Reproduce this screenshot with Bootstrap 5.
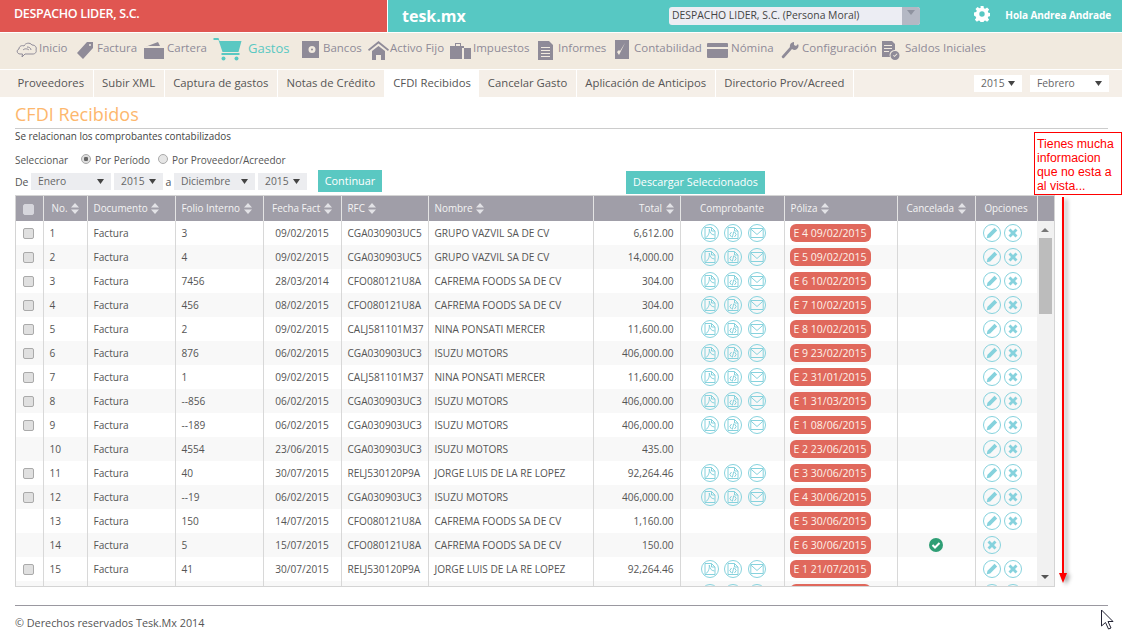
<!DOCTYPE html>
<html lang="es"><head><meta charset="utf-8"><title>CFDI Recibidos</title>
<link rel="stylesheet" href="https://cdn.jsdelivr.net/npm/bootstrap@5.3.0/dist/css/bootstrap.min.css">
<style>
html,body{height:634px;overflow:hidden}
body{font-family:"Open Sans","Liberation Sans",sans-serif;font-size:10.5px;color:#555;background:#fff;position:relative}
.top-bar{height:32px;color:#fff}
.brand-red{width:388px;background:#e05651;padding:0 0 4px 14px;font-weight:600;font-size:12.5px;letter-spacing:-.35px;border-right:1px solid #fff}
.brand-teal{background:#57c8c3;flex:1}
.tesk{font-weight:700;font-size:16px;margin-left:14px;width:267px}
.company-select{width:251px;height:18px;background:#ecedf3;border-radius:3px;overflow:hidden;color:#444;font-size:10.4px}
.company-select span{flex:1;padding-left:3px}
.company-select i{width:18px;height:18px;background:#b4b8c4;display:block;position:relative}
.company-select i::after{content:"";position:absolute;left:5px;top:3px;border:4px solid transparent;border-top:5px solid #8f93a0}
.hello{font-weight:700;font-size:10.05px;margin-left:15px;letter-spacing:-.1px;margin-right:11px;margin-top:-1px}
.gear{margin-top:-4px}
.main-menu{height:36px;margin-top:1px;background:#f1eadf;padding-left:15px;font-size:11.5px;color:#8f8b98}
.main-menu>span{display:flex;align-items:center;position:absolute;top:33px;height:34px}
.main-menu>span em{font-style:normal;margin-bottom:4px}
.main-menu svg{display:block;fill:#8f8b98}
.main-menu>span.cart-item{top:32px}
.main-menu>span.cart-item em{margin-left:5px;margin-bottom:0;font-size:13px;color:#5ac8c2}
.sub-menu{height:27px;margin-top:1px;background:#f5efe8;padding-left:9px;font-size:11.3px;color:#555}
.sub-menu .tabi{height:27px;padding:0 8.5px;border-right:1px solid #fff;display:flex;align-items:center}
.sub-menu .tabi.on{background:#fff;border-right:0}
.plain-sel{appearance:none;border:0;border-radius:0;height:17px;padding:0 0 0 7px;font-family:inherit;font-size:10.3px;color:#666;background-color:#fff;background-repeat:no-repeat;background-position:right 7px center;background-size:7px 5px;background-image:url("data:image/svg+xml,%3Csvg xmlns='http://www.w3.org/2000/svg' viewBox='0 0 7 5'%3E%3Cpath d='M0 0h7L3.500 5z' fill='%23444'/%3E%3C/svg%3E")}
.w48{width:48px}.w79{width:79px;margin-left:8px;margin-right:13px}
.page-head{padding:7px 14px 0 15px}
.page-title{font-size:18px;line-height:20px;color:#fdb76d;font-weight:400;margin:0;border-bottom:1px solid #ccc;height:25px}
.page-sub{font-size:9.9px;line-height:14px;color:#444}
.pick-row{margin:11px 15px 0;height:13px;line-height:13px;font-size:10px}
.pick-row .form-check-input{width:10px;height:10px;margin:-3px 0 0;background-color:#e6e6e6;border:1px solid #aaa;flex:none}
.pick-row .form-check-input:checked{background-color:#ddd;border-color:#aaa;background-image:radial-gradient(circle,#666 0 2px,transparent 2.4px)}
.range-row{margin:4px 15px 0;height:23px;position:relative}
.range-row .plain-sel{background-color:#ecedf0;height:17px}
.teal-btn{background:#5ac8c2;color:#fff;border:0;border-radius:0;font-size:10.9px;padding:0;line-height:1}
.teal-btn:hover{background:#5ac8c2;color:#fff}
.btn-go{width:64px;height:22px;margin:-1px 0 0 11px}
.btn-dl{width:139px;height:23px;margin-left:244px;font-size:10.8px}
.grid-box{width:1040px;height:392px;margin:1px 0 0 15px;border:1px solid #d4d4d4;overflow:hidden}
.grid{table-layout:fixed;margin:0;border-collapse:collapse;font-size:10.1px;color:#555}
.grid td,.grid th{padding:0 6px;border:0;border-right:1px solid #d8d8d8;white-space:nowrap;vertical-align:middle;overflow:hidden;background:transparent;color:inherit;box-shadow:none}
.grid-head{width:1038px}
.grid-head th{height:25px;background:#a09ea8;color:#f4f4f4;font-weight:500;font-size:9.9px;border-right:1px solid #e4e4e4}
.grid-head th:last-child{border-right:0}
.grid-body{width:1021px}
.grid-body tr{height:24px}
.grid-body td{padding-top:2px}
.grid-body tr:nth-child(even) td{background:#f8f8f8}
.grid-pane{height:365px;width:1021px;overflow:hidden}
.sort{width:8px;height:11px;fill:#e2e2e6;vertical-align:-2px;margin-left:1px}
.box-check{width:11px;height:11px;display:block;background:#e0e0e0;border:1px solid #aaa;border-radius:2px;margin:-1px 0 0 1px}
.box-check.hd{background:#d6d6dc;border-color:#d6d6dc;margin-top:1px}
.ico{width:18px;height:18px;fill:none;stroke:#86d2dd;stroke-width:1;display:block}
.f{fill:#86d2dd;stroke:none}
.ico-set{display:flex;justify-content:center;gap:5.500px;padding-left:2px;margin-top:-2px}
.opt-set{display:flex;gap:3px;padding-left:1px;margin-top:-2px}
.poliza{display:block;width:81px;height:18px;line-height:18px;background:#e0685c;color:#fdf3ea;font-size:10.5px;border-radius:6px;text-align:center;font-weight:400;margin:-2px 0 0 1px}
.ok-mark{width:14px;height:14px;display:block;margin:-2px auto 0}
.fake-scroll{width:17px;height:365px;background:#f1f1f1;position:relative}
.fake-scroll b{position:absolute;left:2px;width:13px;height:76px;top:17px;background:#bcbcbc}
.fake-scroll i{position:absolute;left:4px;border:4px solid transparent}
.fake-scroll .up{top:3px;border-bottom:4px solid #777}
.fake-scroll .dn{bottom:3px;border-top:4px solid #555}
.foot{margin:18px 14px 0 15px;border-top:1px solid #9a98a0;padding-top:9px;font-size:10.8px;line-height:15px;color:#555}
.note{position:absolute;left:1034px;top:132px;width:88px;height:63px;border:1px solid #f00;color:#f00;background:#fff;font:12.3px/14px "Liberation Sans",sans-serif;padding:4px 0 0 2px}
.arrow{position:absolute;left:1058px;top:197px;width:14px;height:392px;overflow:visible;filter:drop-shadow(3px 2px 2px rgba(0,0,0,.4))}
.cursor{position:absolute;left:1100px;top:609px;width:15px;height:22px}
</style></head><body>
<svg width="0" height="0" class="position-absolute"><defs>
<symbol id="s" viewBox="0 0 8 11"><path d="M4 0l4 4.500H0zM4 11L0 6.500h8z"/></symbol>
<symbol id="p" viewBox="0 0 18 18"><circle cx="9" cy="9" r="8.500"/><path d="M4 3.500h6.500L14 7v7.500H4zM10.500 3.500V7H14M4.500 14C8 11.500 8.500 8 8.300 5c.5 3.500 1.500 5.500 5.200 6"/></symbol>
<symbol id="x" viewBox="0 0 18 18"><circle cx="9" cy="9" r="8.500"/><path d="M4 3.500h6.500L14 7v7.500H4zM10.500 3.500V7H14M7.500 8L5.800 10.500l1.700 2.500M10.500 8l1.700 2.500-1.700 2.500M9.800 7.500l-1.500 6"/></symbol>
<symbol id="m" viewBox="0 0 18 18"><circle cx="9" cy="9" r="8.500"/><path d="M2.800 4.500h12.400v9H2.800zM2.800 5L9 10.500 15.200 5"/></symbol>
<symbol id="e" viewBox="0 0 18 18"><circle cx="9" cy="9" r="8.500"/><path class="f" d="M11.500 3.800l2.700 2.700-7 7-3.500.8.800-3.500z"/></symbol>
<symbol id="d" viewBox="0 0 18 18"><circle cx="9" cy="9" r="8.500"/><path class="f" d="M6.500 4.500L9 7l2.500-2.500 2 2L11 9l2.500 2.500-2 2L9 11l-2.500 2.500-2-2L7 9 4.500 6.500z"/></symbol>
</defs></svg>

<div class="top-bar d-flex">
  <div class="brand-red d-flex align-items-center">DESPACHO LIDER, S.C.</div>
  <div class="brand-teal d-flex align-items-center">
    <div class="tesk">tesk.mx</div>
    <div class="company-select d-flex align-items-center"><span>DESPACHO LIDER, S.C. (Persona Moral)</span><i></i></div>
    <svg width="16" height="16" viewBox="0 0 16 16" fill="#fff" class="ms-auto gear"><path fill-rule="evenodd" d="M6.500 0h3l.4 2.200 1.300.6L13.100 1.500l2 2-1.300 1.900.6 1.300 2.200.4v3l-2.200.4-.6 1.300 1.300 1.900-2 2-1.900-1.300-1.300.6-.4 2.200h-3l-.4-2.200-1.300-.6-1.900 1.300-2-2 1.300-1.900-.6-1.300L0 9.500v-3l2.200-.4.6-1.300L1.500 3l2-2 1.900 1.300 1.300-.6zM8 5.300a2.700 2.700 0 100 5.400 2.700 2.700 0 000-5.400z"/></svg>
    <div class="hello">Hola Andrea Andrade</div>
  </div>
</div>

<div class="main-menu">
  <span style="left:16px"><svg width="22" height="18" viewBox="0 0 22 18" style="fill:none;stroke:#8f8b98"><path d="M4 13c-3 0-4-4-1-5 0-3 3-4 5-3 1-3 6-4 8-1 3 0 5 2 4 5 1 2-1 4-3 4H9l-3 3 .500-3z"/><path d="M7 9c2-2 5-1 6 0M11 6c2 0 4 1 4 3"/></svg><em style="margin-left:1px">Inicio</em></span>
  <span style="left:76px"><svg width="18" height="19" viewBox="0 0 18 19"><path d="M11 1h6v6L7 18l-6-6zM14 3a1 1 0 100 2 1 1 0 000-2z" fill-rule="evenodd"/></svg><em style="margin-left:3px">Factura</em></span>
  <span style="left:144px"><svg width="20" height="20" viewBox="0 0 20 20"><path d="M1 7l13-5 2 4H4zM0 8h20v11H1a1 1 0 01-1-1z"/></svg><em style="margin-left:3px">Cartera</em></span>
  <span class="cart-item" style="left:213px"><svg width="30" height="24" viewBox="0 0 29 24" style="fill:#5ac8c2"><path d="M0 1h5l1 3h22l-3 11H9L5 3H0zM8 16h18v2H8z"/><circle cx="10" cy="21.500" r="2"/><circle cx="23" cy="21.500" r="2"/></svg><em>Gastos</em></span>
  <span style="left:301px"><svg width="18" height="20" viewBox="0 0 18 20"><path fill-rule="evenodd" d="M1 1h17v17H1zM11 6a3.500 3.500 0 100 7 3.500 3.500 0 000-7zM11 8.500a1 1 0 110 2 1 1 0 010-2z"/></svg><em style="margin-left:4px">Bancos</em></span>
  <span style="left:368px"><svg width="21" height="20" viewBox="0 0 21 20"><path d="M10.500 1L21 9.500l-1 1.500-9.500-7.500L1 11 0 9.500zM4 11l6.500-5 6.500 5v9h-4v-5H8v5H4z"/></svg><em style="margin-left:1px">Activo Fijo</em></span>
  <span style="left:450px"><svg width="21" height="19" viewBox="0 0 21 19"><path d="M0 5h5V2h6v3h3v13H0zM6 3v2h4V3zM12 7h9v11h-9z" fill-rule="evenodd"/></svg><em style="margin-left:2px">Impuestos</em></span>
  <span style="left:538px"><svg width="15" height="20" viewBox="0 0 15 20"><path fill-rule="evenodd" d="M0 1h11l4 4v15H0zM3 7v1h9V7zM3 10v1h9v-1zM3 13v1h9v-1zM3 16v1h9v-1z"/></svg><em style="margin-left:5px">Informes</em></span>
  <span style="left:615px"><svg width="14" height="20" viewBox="0 0 14 20"><path fill-rule="evenodd" d="M0 0h14v19H0zM2 12l2 3 6-12-5 8-1-1z"/></svg><em style="margin-left:5px">Contabilidad</em></span>
  <span style="left:707px"><svg width="21" height="15" viewBox="0 0 21 15"><path fill-rule="evenodd" d="M1 0h19a1 1 0 011 1v13a1 1 0 01-1 1H1a1 1 0 01-1-1V1a1 1 0 011-1zM0 4v2h21V4z"/></svg><em style="margin-left:3px">Nómina</em></span>
  <span style="left:781px"><svg width="18" height="19" viewBox="0 0 18 19"><path d="M13 1a4 4 0 00-4 5L1 15c-1 1 1 3 2 2l8-9a4 4 0 006-5l-2 2-2-1V2z"/></svg><em style="margin-left:3px">Configuración</em></span>
  <span style="left:882px"><svg width="18" height="20" viewBox="0 0 18 20"><path fill-rule="evenodd" d="M0 1h10l3 3v6a5 5 0 00-5 7H0zM2 5v1h8V5zM2 8v1h8V8zM2 11v1h5v-1z"/><path fill-rule="evenodd" d="M13 11a4.500 4.500 0 110 9 4.500 4.500 0 010-9zM11 15.500l1.500 1.500 3-3-.7-.6-2.300 2.300-.8-.8z"/></svg><em style="margin-left:5px">Saldos Iniciales</em></span>
</div>

<div class="sub-menu d-flex align-items-center">
  <span class="tabi">Proveedores</span><span class="tabi">Subir XML</span><span class="tabi">Captura de gastos</span><span class="tabi">Notas de Crédito</span><span class="tabi on">CFDI Recibidos</span><span class="tabi">Cancelar Gasto</span><span class="tabi">Aplicación de Anticipos</span><span class="tabi">Directorio Prov/Acreed</span>
  <select class="plain-sel w48 ms-auto" aria-label="Año"><option>2015</option></select>
  <select class="plain-sel w79" aria-label="Mes"><option>Febrero</option></select>
</div>

<div class="page-head">
  <h1 class="page-title">CFDI Recibidos</h1>
  <div class="page-sub">Se relacionan los comprobantes contabilizados</div>
</div>
<div class="pick-row d-flex align-items-center">
  <span style="width:66px">Seleccionar</span>
  <input class="form-check-input" type="radio" name="t" checked aria-label="Por Período"><span style="margin-left:4px;width:63px">Por Período</span>
  <input class="form-check-input" type="radio" name="t" aria-label="Por Proveedor"><span style="margin-left:4px">Por Proveedor/Acreedor</span>
</div>
<div class="range-row d-flex align-items-start">
  <span style="width:16px;line-height:22px">De</span>
  <select class="plain-sel" style="width:80px;margin-top:2px" aria-label="Mes inicial"><option>Enero</option></select>
  <select class="plain-sel" style="width:49px;margin:2px 0 0 3px" aria-label="Año inicial"><option>2015</option></select>
  <span style="width:11px;line-height:22px;text-align:center">a</span>
  <select class="plain-sel" style="width:81px;margin-top:2px" aria-label="Mes final"><option>Diciembre</option></select>
  <select class="plain-sel" style="width:49px;margin:2px 0 0 3px" aria-label="Año final"><option>2015</option></select>
  <button class="btn teal-btn btn-go" type="button">Continuar</button>
  <button class="btn teal-btn btn-dl" type="button">Descargar Seleccionados</button>
</div>

<div class="grid-box">
<table class="table grid grid-head"><colgroup><col style="width:27px"><col style="width:44px"><col style="width:88px"><col style="width:88px"><col style="width:78px"><col style="width:87px"><col style="width:165px"><col style="width:87px"><col style="width:104px"><col style="width:113px"><col style="width:78px"><col style="width:62px"><col></colgroup>
<thead><tr>
<th><span class="box-check hd"></span></th><th class="ps-2">No. <svg class="sort"><use href="#s"/></svg></th><th>Documento <svg class="sort"><use href="#s"/></svg></th><th>Folio Interno <svg class="sort"><use href="#s"/></svg></th><th class="text-center px-0">Fecha Fact <svg class="sort"><use href="#s"/></svg></th><th>RFC <svg class="sort"><use href="#s"/></svg></th><th>Nombre <svg class="sort"><use href="#s"/></svg></th><th class="text-end">Total <svg class="sort"><use href="#s"/></svg></th><th class="text-center">Comprobante</th><th>Póliza <svg class="sort"><use href="#s"/></svg></th><th class="text-center px-0">Cancelada <svg class="sort"><use href="#s"/></svg></th><th class="text-center px-0">Opciones</th><th></th>
</tr></thead></table>
<div class="d-flex">
<div class="grid-pane">
<table class="table grid grid-body"><colgroup><col style="width:27px"><col style="width:44px"><col style="width:88px"><col style="width:88px"><col style="width:78px"><col style="width:87px"><col style="width:165px"><col style="width:87px"><col style="width:104px"><col style="width:113px"><col style="width:78px"><col style="width:62px"></colgroup>
<tbody>
<tr><td><span class="box-check"></span></td><td>1</td><td>Factura</td><td>3</td><td class="text-center px-0">09/02/2015</td><td>CGA030903UC5</td><td>GRUPO VAZVIL SA DE CV</td><td class="text-end">6,612.00</td><td><div class="ico-set"><svg class="ico"><use href="#p"/></svg><svg class="ico"><use href="#x"/></svg><svg class="ico"><use href="#m"/></svg></div></td><td class="px-1"><span class="poliza">E 4 09/02/2015</span></td><td></td><td><div class="opt-set"><svg class="ico"><use href="#e"/></svg><svg class="ico"><use href="#d"/></svg></div></td></tr>
<tr><td><span class="box-check"></span></td><td>2</td><td>Factura</td><td>4</td><td class="text-center px-0">09/02/2015</td><td>CGA030903UC5</td><td>GRUPO VAZVIL SA DE CV</td><td class="text-end">14,000.00</td><td><div class="ico-set"><svg class="ico"><use href="#p"/></svg><svg class="ico"><use href="#x"/></svg><svg class="ico"><use href="#m"/></svg></div></td><td class="px-1"><span class="poliza">E 5 09/02/2015</span></td><td></td><td><div class="opt-set"><svg class="ico"><use href="#e"/></svg><svg class="ico"><use href="#d"/></svg></div></td></tr>
<tr><td><span class="box-check"></span></td><td>3</td><td>Factura</td><td>7456</td><td class="text-center px-0">28/03/2014</td><td>CFO080121U8A</td><td>CAFREMA FOODS SA DE CV</td><td class="text-end">304.00</td><td><div class="ico-set"><svg class="ico"><use href="#p"/></svg><svg class="ico"><use href="#x"/></svg><svg class="ico"><use href="#m"/></svg></div></td><td class="px-1"><span class="poliza">E 6 10/02/2015</span></td><td></td><td><div class="opt-set"><svg class="ico"><use href="#e"/></svg><svg class="ico"><use href="#d"/></svg></div></td></tr>
<tr><td><span class="box-check"></span></td><td>4</td><td>Factura</td><td>456</td><td class="text-center px-0">08/02/2015</td><td>CFO080121U8A</td><td>CAFREMA FOODS SA DE CV</td><td class="text-end">304.00</td><td><div class="ico-set"><svg class="ico"><use href="#p"/></svg><svg class="ico"><use href="#x"/></svg><svg class="ico"><use href="#m"/></svg></div></td><td class="px-1"><span class="poliza">E 7 10/02/2015</span></td><td></td><td><div class="opt-set"><svg class="ico"><use href="#e"/></svg><svg class="ico"><use href="#d"/></svg></div></td></tr>
<tr><td><span class="box-check"></span></td><td>5</td><td>Factura</td><td>2</td><td class="text-center px-0">09/02/2015</td><td>CALJ581101M37</td><td>NINA PONSATI MERCER</td><td class="text-end">11,600.00</td><td><div class="ico-set"><svg class="ico"><use href="#p"/></svg><svg class="ico"><use href="#x"/></svg><svg class="ico"><use href="#m"/></svg></div></td><td class="px-1"><span class="poliza">E 8 10/02/2015</span></td><td></td><td><div class="opt-set"><svg class="ico"><use href="#e"/></svg><svg class="ico"><use href="#d"/></svg></div></td></tr>
<tr><td><span class="box-check"></span></td><td>6</td><td>Factura</td><td>876</td><td class="text-center px-0">06/02/2015</td><td>CGA030903UC3</td><td>ISUZU MOTORS</td><td class="text-end">406,000.00</td><td><div class="ico-set"><svg class="ico"><use href="#p"/></svg><svg class="ico"><use href="#x"/></svg><svg class="ico"><use href="#m"/></svg></div></td><td class="px-1"><span class="poliza">E 9 23/02/2015</span></td><td></td><td><div class="opt-set"><svg class="ico"><use href="#e"/></svg><svg class="ico"><use href="#d"/></svg></div></td></tr>
<tr><td><span class="box-check"></span></td><td>7</td><td>Factura</td><td>1</td><td class="text-center px-0">09/02/2015</td><td>CALJ581101M37</td><td>NINA PONSATI MERCER</td><td class="text-end">11,600.00</td><td><div class="ico-set"><svg class="ico"><use href="#p"/></svg><svg class="ico"><use href="#x"/></svg><svg class="ico"><use href="#m"/></svg></div></td><td class="px-1"><span class="poliza">E 2 31/01/2015</span></td><td></td><td><div class="opt-set"><svg class="ico"><use href="#e"/></svg><svg class="ico"><use href="#d"/></svg></div></td></tr>
<tr><td><span class="box-check"></span></td><td>8</td><td>Factura</td><td>--856</td><td class="text-center px-0">06/02/2015</td><td>CGA030903UC3</td><td>ISUZU MOTORS</td><td class="text-end">406,000.00</td><td><div class="ico-set"><svg class="ico"><use href="#p"/></svg><svg class="ico"><use href="#x"/></svg><svg class="ico"><use href="#m"/></svg></div></td><td class="px-1"><span class="poliza">E 1 31/03/2015</span></td><td></td><td><div class="opt-set"><svg class="ico"><use href="#e"/></svg><svg class="ico"><use href="#d"/></svg></div></td></tr>
<tr><td><span class="box-check"></span></td><td>9</td><td>Factura</td><td>--189</td><td class="text-center px-0">06/02/2015</td><td>CGA030903UC3</td><td>ISUZU MOTORS</td><td class="text-end">406,000.00</td><td><div class="ico-set"><svg class="ico"><use href="#p"/></svg><svg class="ico"><use href="#x"/></svg><svg class="ico"><use href="#m"/></svg></div></td><td class="px-1"><span class="poliza">E 1 08/06/2015</span></td><td></td><td><div class="opt-set"><svg class="ico"><use href="#e"/></svg><svg class="ico"><use href="#d"/></svg></div></td></tr>
<tr><td></td><td>10</td><td>Factura</td><td>4554</td><td class="text-center px-0">23/06/2015</td><td>CGA030903UC3</td><td>ISUZU MOTORS</td><td class="text-end">435.00</td><td></td><td class="px-1"><span class="poliza">E 2 23/06/2015</span></td><td></td><td><div class="opt-set"><svg class="ico"><use href="#e"/></svg><svg class="ico"><use href="#d"/></svg></div></td></tr>
<tr><td><span class="box-check"></span></td><td>11</td><td>Factura</td><td>40</td><td class="text-center px-0">30/07/2015</td><td>RELJ530120P9A</td><td>JORGE LUIS DE LA RE LOPEZ</td><td class="text-end">92,264.46</td><td><div class="ico-set"><svg class="ico"><use href="#p"/></svg><svg class="ico"><use href="#x"/></svg><svg class="ico"><use href="#m"/></svg></div></td><td class="px-1"><span class="poliza">E 3 30/06/2015</span></td><td></td><td><div class="opt-set"><svg class="ico"><use href="#e"/></svg><svg class="ico"><use href="#d"/></svg></div></td></tr>
<tr><td><span class="box-check"></span></td><td>12</td><td>Factura</td><td>--19</td><td class="text-center px-0">06/02/2015</td><td>CGA030903UC3</td><td>ISUZU MOTORS</td><td class="text-end">406,000.00</td><td><div class="ico-set"><svg class="ico"><use href="#p"/></svg><svg class="ico"><use href="#x"/></svg><svg class="ico"><use href="#m"/></svg></div></td><td class="px-1"><span class="poliza">E 4 30/06/2015</span></td><td></td><td><div class="opt-set"><svg class="ico"><use href="#e"/></svg><svg class="ico"><use href="#d"/></svg></div></td></tr>
<tr><td></td><td>13</td><td>Factura</td><td>150</td><td class="text-center px-0">14/07/2015</td><td>CFO080121U8A</td><td>CAFREMA FOODS SA DE CV</td><td class="text-end">1,160.00</td><td></td><td class="px-1"><span class="poliza">E 5 30/06/2015</span></td><td></td><td><div class="opt-set"><svg class="ico"><use href="#e"/></svg><svg class="ico"><use href="#d"/></svg></div></td></tr>
<tr><td></td><td>14</td><td>Factura</td><td>5</td><td class="text-center px-0">15/07/2015</td><td>CFO080121U8A</td><td>CAFREMA FOODS SA DE CV</td><td class="text-end">150.00</td><td></td><td class="px-1"><span class="poliza">E 6 30/06/2015</span></td><td><svg class="ok-mark" viewBox="0 0 14 14"><circle cx="7" cy="7" r="7" fill="#2f9e75"/><path d="M3.500 7l2.500 2.500 4.500-4.500" fill="none" stroke="#fff" stroke-width="2"/></svg></td><td><div class="opt-set"><svg class="ico"><use href="#d"/></svg></div></td></tr>
<tr><td><span class="box-check"></span></td><td>15</td><td>Factura</td><td>41</td><td class="text-center px-0">30/07/2015</td><td>RELJ530120P9A</td><td>JORGE LUIS DE LA RE LOPEZ</td><td class="text-end">92,264.46</td><td><div class="ico-set"><svg class="ico"><use href="#p"/></svg><svg class="ico"><use href="#x"/></svg><svg class="ico"><use href="#m"/></svg></div></td><td class="px-1"><span class="poliza">E 1 21/07/2015</span></td><td></td><td><div class="opt-set"><svg class="ico"><use href="#e"/></svg><svg class="ico"><use href="#d"/></svg></div></td></tr>
<tr><td></td><td></td><td></td><td></td><td></td><td></td><td></td><td></td><td><div class="ico-set"><svg class="ico"><use href="#p"/></svg><svg class="ico"><use href="#x"/></svg><svg class="ico"><use href="#m"/></svg></div></td><td class="px-1"><span class="poliza"></span></td><td></td><td><div class="opt-set"><svg class="ico"><use href="#e"/></svg><svg class="ico"><use href="#d"/></svg></div></td></tr>
</tbody></table>
</div>
<div class="fake-scroll"><i class="up"></i><b></b><i class="dn"></i></div>
</div>
</div>

<div class="foot">© Derechos reservados Tesk.Mx 2014</div>

<div class="note">Tienes mucha informacion que no esta a al vista...</div>
<svg class="arrow" viewBox="0 0 14 392"><path d="M5 0V380" stroke="#f00" stroke-width="2"/><path d="M1 376h8l-4 10z" fill="#f00"/></svg>
<svg class="cursor" viewBox="0 0 15 22"><path d="M1.500 1v16l4-3.500 3 6.500 2.500-1-3-6.500h5z" fill="#fff" stroke="#223" stroke-width="1"/></svg>
</body></html>
